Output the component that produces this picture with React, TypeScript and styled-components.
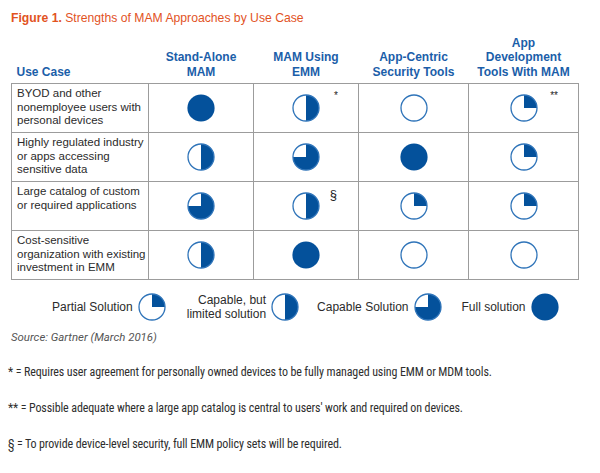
import React from "react";
import styled, { createGlobalStyle } from "styled-components";

const Global = createGlobalStyle`
  html, body { margin: 0; padding: 0; background: #fff; }
  body { font-family: "Liberation Sans", Arial, sans-serif; }
`;

const Page = styled.div`
  width: 600px;
  height: 473px;
  padding: 10px 0 0 11px;
  box-sizing: border-box;
  overflow: hidden;
`;

const Title = styled.div`
  font-size: 12.2px;
  line-height: 16px;
  color: #e2531f;
  height: 16px;
  b { font-weight: bold; }
`;

const Table = styled.table`
  border-collapse: collapse;
  table-layout: fixed;
  width: 562px;
`;

const HeadCell = styled.th<{ $left?: boolean; $w: number }>`
  width: ${(p) => p.$w}px;
  height: 53px;
  padding: 0 0 4px ${(p) => (p.$left ? "5px" : "0")};
  vertical-align: bottom;
  text-align: ${(p) => (p.$left ? "left" : "center")};
  font-size: 12px;
  line-height: 14.5px;
  font-weight: bold;
  color: #1b5ea9;
`;

const Row = styled.tr`
  height: 49px;
`;

const LabelCell = styled.td`
  border: 1px solid #9c9c9c;
  padding: 3px 0 3px 5px;
  vertical-align: top;
  font-size: 11.5px;
  line-height: 13.5px;
  color: #2b2b2b;
  white-space: nowrap;
  overflow: hidden;
`;

const MarkCell = styled.td`
  border: 1px solid #9c9c9c;
  padding: 0;
  vertical-align: middle;
  text-align: center;
  position: relative;
`;

const Note = styled.span<{ $big?: boolean; $right: number; $top: number }>`
  position: absolute;
  right: ${(p) => p.$right}px;
  top: ${(p) => p.$top}px;
  font-size: ${(p) => (p.$big ? "13px" : "10px")};
  line-height: 1;
  color: #222;
`;

const PieSvg = styled.svg`
  display: block;
  margin: 0 auto;
`;

type Kind = "empty" | "quarter" | "half" | "three" | "full";

const FILL = "#04519b";
const STROKE = "#2f74b9";

function Pie({ kind }: { kind: Kind }) {
  let shape: React.ReactNode = null;
  if (kind === "quarter") shape = <path d="M14 14 L14 1 A13 13 0 0 1 27 14 Z" fill={FILL} />;
  if (kind === "half") shape = <path d="M14 1 A13 13 0 0 1 14 27 Z" fill={FILL} />;
  if (kind === "three") shape = <path d="M14 14 L14 1 A13 13 0 1 1 1 14 Z" fill={FILL} />;
  return (
    <PieSvg width="28" height="28" viewBox="0 0 28 28">
      {kind === "full" ? (
        <circle cx="14" cy="14" r="13.6" fill={FILL} />
      ) : (
        <>
          <circle cx="14" cy="14" r="13" fill="#fff" />
          {shape}
          <circle cx="14" cy="14" r="13" fill="none" stroke={STROKE} strokeWidth="1.3" />
        </>
      )}
    </PieSvg>
  );
}

const Legend = styled.div`
  display: flex;
  align-items: center;
  margin-top: 12px;
  padding-left: 41px;
  height: 30px;
`;

const LegendItem = styled.div<{ $gap: number }>`
  display: flex;
  align-items: center;
  gap: 5px;
  margin-right: ${(p) => p.$gap}px;
`;

const LegendText = styled.div`
  font-size: 12px;
  line-height: 14px;
  color: #2b2b2b;
  text-align: right;
`;

const Source = styled.div`
  margin-top: 8px;
  font-family: Roboto, "Liberation Sans", sans-serif;
  font-style: italic;
  font-size: 11.4px;
  line-height: 14px;
  color: #555;
`;

const Notes = styled.div`
  margin-top: 21px;
  margin-left: -3px;
  display: flex;
  flex-direction: column;
  gap: 22px;
`;

const NoteLine = styled.div`
  font-family: "Roboto Condensed", Roboto, "Liberation Sans", sans-serif;
  font-size: 12px;
  line-height: 14px;
  letter-spacing: -0.12px;
  color: #2e2e2e;
`;

type Cell = { k: Kind; note?: { t: string; big?: boolean; right: number; top: number } };

const rows: { label: string[]; cells: Cell[] }[] = [
  {
    label: ["BYOD and other", "nonemployee users with", "personal devices"],
    cells: [
      { k: "full" },
      { k: "half", note: { t: "*", right: 20, top: 7 } },
      { k: "empty" },
      { k: "quarter", note: { t: "**", right: 20, top: 7 } },
    ],
  },
  {
    label: ["Highly regulated industry", "or apps accessing", "sensitive data"],
    cells: [{ k: "half" }, { k: "three" }, { k: "full" }, { k: "quarter" }],
  },
  {
    label: ["Large catalog of custom", "or required applications"],
    cells: [
      { k: "three" },
      { k: "half", note: { t: "§", big: true, right: 21, top: 6 } },
      { k: "quarter" },
      { k: "quarter" },
    ],
  },
  {
    label: ["Cost-sensitive", "organization with existing", "investment in EMM"],
    cells: [{ k: "half" }, { k: "full" }, { k: "empty" }, { k: "empty" }],
  },
];

export default function App() {
  return (
    <Page>
      <Global />
      <Title>
        <b>Figure 1.</b> Strengths of MAM Approaches by Use Case
      </Title>
      <Table>
        <thead>
          <tr>
            <HeadCell $left $w={132}>Use Case</HeadCell>
            <HeadCell $w={105}>Stand-Alone<br />MAM</HeadCell>
            <HeadCell $w={105}>MAM Using<br />EMM</HeadCell>
            <HeadCell $w={110}>App-Centric<br />Security Tools</HeadCell>
            <HeadCell $w={110}>App<br />Development<br />Tools With MAM</HeadCell>
          </tr>
        </thead>
        <tbody>
          {rows.map((r, i) => (
            <Row key={i}>
              <LabelCell>
                {r.label.map((l, j) => (
                  <div key={j}>{l}</div>
                ))}
              </LabelCell>
              {r.cells.map((c, j) => (
                <MarkCell key={j}>
                  <Pie kind={c.k} />
                  {c.note && (
                    <Note $big={c.note.big} $right={c.note.right} $top={c.note.top}>
                      {c.note.t}
                    </Note>
                  )}
                </MarkCell>
              ))}
            </Row>
          ))}
        </tbody>
      </Table>
      <Legend>
        <LegendItem $gap={21}>
          <LegendText>Partial Solution</LegendText>
          <Pie kind="quarter" />
        </LegendItem>
        <LegendItem $gap={18}>
          <LegendText>
            Capable, but
            <br />
            limited solution
          </LegendText>
          <Pie kind="half" />
        </LegendItem>
        <LegendItem $gap={20}>
          <LegendText>Capable Solution</LegendText>
          <Pie kind="three" />
        </LegendItem>
        <LegendItem $gap={0}>
          <LegendText>Full solution</LegendText>
          <Pie kind="full" />
        </LegendItem>
      </Legend>
      <Source>Source: Gartner (March 2016)</Source>
      <Notes>
        <NoteLine>* = Requires user agreement for personally owned devices to be fully managed using EMM or MDM tools.</NoteLine>
        <NoteLine>** = Possible adequate where a large app catalog is central to users' work and required on devices.</NoteLine>
        <NoteLine>§ = To provide device-level security, full EMM policy sets will be required.</NoteLine>
      </Notes>
    </Page>
  );
}
